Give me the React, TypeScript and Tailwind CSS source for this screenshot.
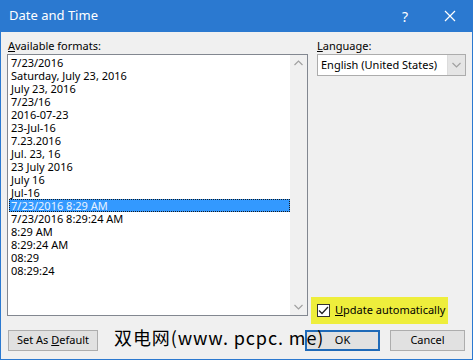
import React from "react";

const formats = [
  "7/23/2016",
  "Saturday, July 23, 2016",
  "July 23, 2016",
  "7/23/16",
  "2016-07-23",
  "23-Jul-16",
  "7.23.2016",
  "Jul. 23, 16",
  "23 July 2016",
  "July 16",
  "Jul-16",
  "7/23/2016 8:29 AM",
  "7/23/2016 8:29:24 AM",
  "8:29 AM",
  "8:29:24 AM",
  "08:29",
  "08:29:24",
];

const Chevron = ({ up }: { up?: boolean }) => (
  <svg width="9" height="6" viewBox="0 0 9 6">
    <path
      d={up ? "M0.5 5 L4.5 1 L8.5 5" : "M0.5 1 L4.5 5 L8.5 1"}
      fill="none"
      stroke="#a0a0a0"
      strokeWidth="1.2"
    />
  </svg>
);

export default function App() {
  return (
    <div
      className="relative w-[473px] h-[360px] bg-[#f0f0f0] overflow-hidden flex flex-col text-[11px] text-black whitespace-nowrap"
      style={{ fontFamily: '"Noto Sans", sans-serif' }}
    >
      {/* Title bar */}
      <div className="h-[32px] bg-[#2b79d0] flex items-center text-white shrink-0">
        <div className="pl-[9px] text-[13px] flex-1">Date and Time</div>
        <div className="w-[30px] text-center text-[14px] mr-[15px]">?</div>
        <div className="w-[30px] flex justify-center mr-[8px]">
          <svg width="12" height="12" viewBox="0 0 12 12">
            <path d="M1 1 L11 11 M11 1 L1 11" stroke="white" strokeWidth="1.2" />
          </svg>
        </div>
      </div>

      {/* Body */}
      <div className="flex-1 flex flex-col border-x border-b border-[#2b79d0] pt-[7px] pb-[8px] px-[6px]">
        <div className="flex flex-1 gap-[9px]">
          {/* Left column */}
          <div className="w-[301px] flex flex-col">
            <div className="h-[15px] leading-[14px] pl-[1px]">
              <span className="underline">A</span>vailable formats:
            </div>
            <div className="h-[262px] border border-[#828790] bg-white flex">
              <div className="flex-1 pt-[1px] pl-[1px]">
                {formats.map((f, i) =>
                  i === 11 ? (
                    <div
                      key={f}
                      className="h-[13px] leading-[13px] bg-[#3399ff] text-[#e8f3ff] pl-[1px] border border-dotted border-[#1a1a1a] flex items-center"
                    >
                      {f}
                    </div>
                  ) : (
                    <div key={f} className="h-[13px] leading-[13px] pl-[2px]">
                      {f}
                    </div>
                  )
                )}
              </div>
              <div className="w-[17px] bg-[#f0f0f0] flex flex-col justify-between items-center py-[5px]">
                <Chevron up />
                <Chevron />
              </div>
            </div>
          </div>

          {/* Right column */}
          <div className="flex-1 flex flex-col">
            <div className="h-[15px] leading-[14px]">
              <span className="underline">L</span>anguage:
            </div>
            <div className="h-[22px] border border-[#acacac] bg-white flex items-stretch">
              <div className="flex-1 pl-[3px] flex items-center">English (United States)</div>
              <div className="w-[18px] bg-[#e5e5e5] border-l border-[#dcdcdc] flex items-center justify-center">
                <Chevron />
              </div>
            </div>
            <div className="flex-1" />
            <div className="-ml-[6px] w-[137px] h-[27px] bg-[#eeee3c] flex items-center pl-[6px]">
              <div className="w-[13px] h-[13px] border border-[#333333] bg-white flex items-center justify-center shrink-0">
                <svg width="11" height="9" viewBox="0 0 11 9">
                  <path d="M1 4.5 L4 7.5 L10 1" fill="none" stroke="#222" strokeWidth="1.3" />
                </svg>
              </div>
              <div className="ml-[5px]">
                <span className="underline">U</span>pdate automatically
              </div>
            </div>
          </div>
        </div>

        {/* Buttons */}
        <div className="flex mt-[6px] h-[21px]">
          <div className="w-[90px] h-[21px] bg-[#e1e1e1] border border-[#adadad] flex items-center justify-center ml-[1px]">
            Set As&nbsp;<span className="underline">D</span>efault
          </div>
          <div className="flex-1" />
          <div className="w-[75px] h-[21px] bg-[#e1e1e1] border-2 border-[#1f6ab8] flex items-center justify-center">
            OK
          </div>
          <div className="w-[75px] h-[21px] bg-[#e1e1e1] border border-[#adadad] flex items-center justify-center ml-[10px] mr-[1px]">
            Cancel
          </div>
        </div>
      </div>

      {/* Watermark overlay */}
      <div
        className="absolute left-[114px] top-[325px] text-[18px] leading-[24px] text-black whitespace-nowrap tracking-[0.9px]"
        style={{ fontFamily: '"Noto Sans CJK SC", sans-serif' }}
      >
        双电网(www. pcpc. me)
      </div>
    </div>
  );
}
